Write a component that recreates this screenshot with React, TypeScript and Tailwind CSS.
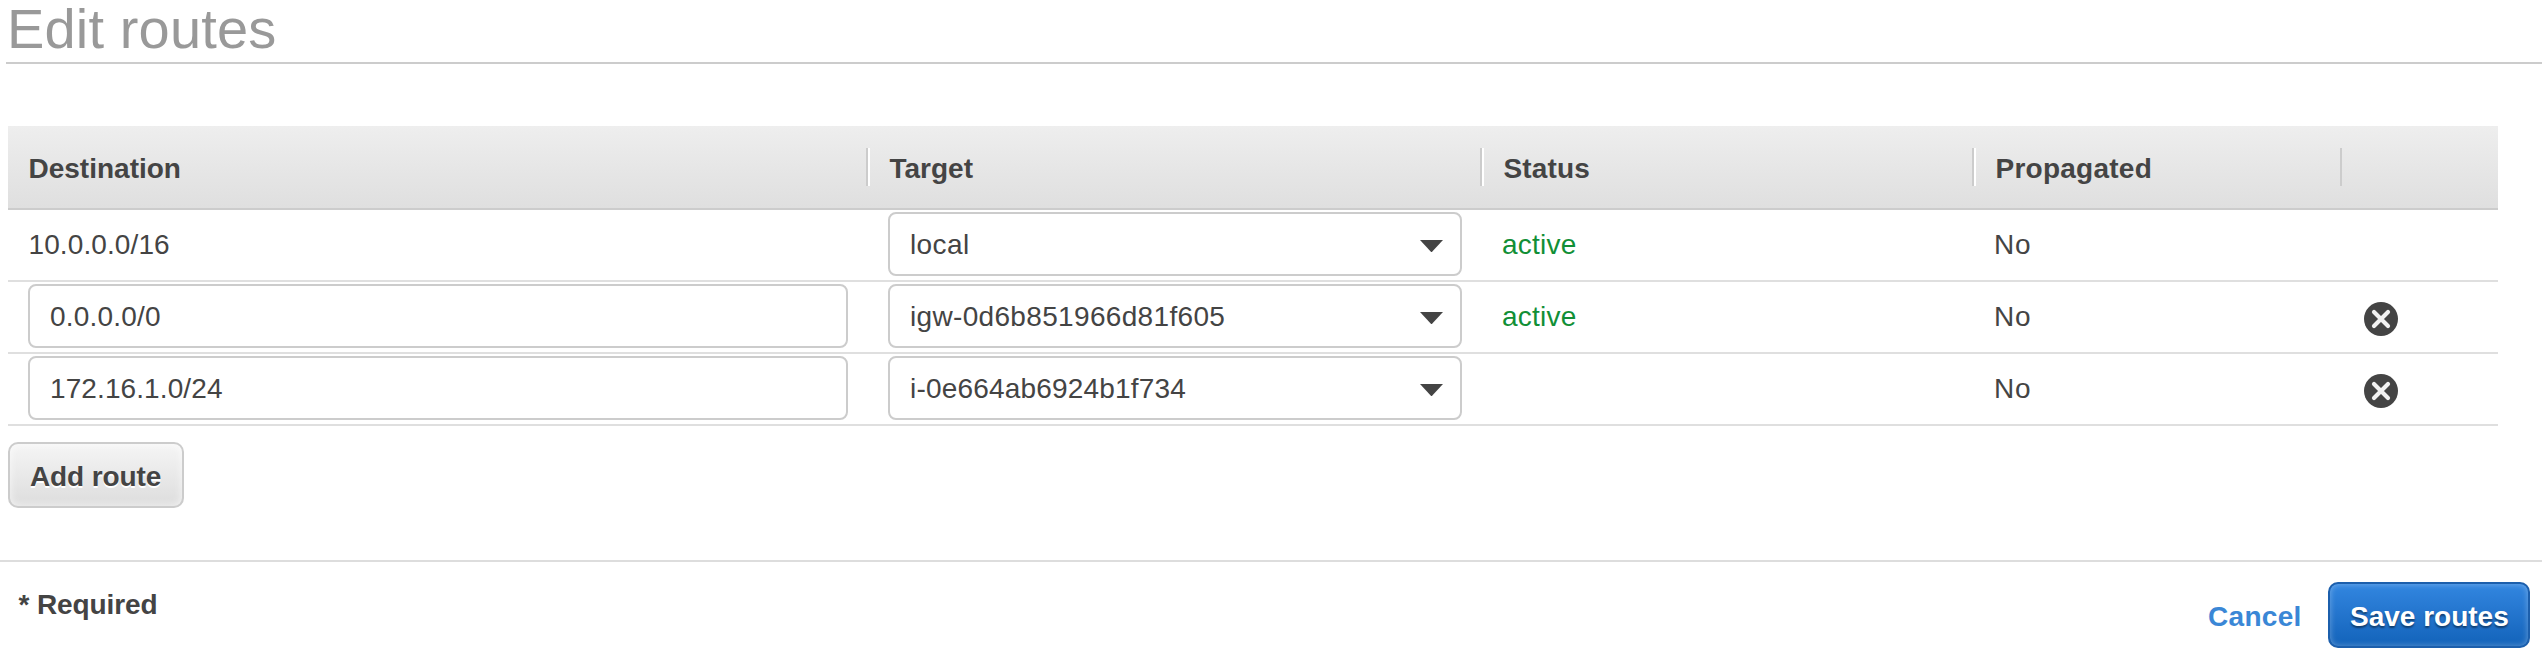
import React from "react";

type Route = {
  destination: string;
  destinationSpacing: string;
  target: string;
  targetSpacing: string;
  status: string;
  locked: boolean;
};

const routes: Route[] = [
  { destination: "10.0.0.0/16", destinationSpacing: "tracking-[0.1px]", target: "local", targetSpacing: "tracking-[0.4px]", status: "active", locked: true },
  { destination: "0.0.0.0/0", destinationSpacing: "tracking-[0.2px]", target: "igw-0d6b851966d81f605", targetSpacing: "tracking-[0.33px]", status: "active", locked: false },
  { destination: "172.16.1.0/24", destinationSpacing: "tracking-[0.1px]", target: "i-0e664ab6924b1f734", targetSpacing: "tracking-[0.18px]", status: "", locked: false },
];

const columns = "grid grid-cols-[858px_614px_492px_368px_158px]";

function Divider({ highlight = true }: { highlight?: boolean }) {
  return (
    <span
      className={
        highlight
          ? "h-[38px] w-1 shrink-0 border-l-2 border-r-2 border-l-[#cccccc] border-r-white"
          : "h-[38px] w-1 shrink-0 border-l-2 border-l-[#cccccc]"
      }
    />
  );
}

function CaretIcon() {
  return (
    <svg className="mb-[-4px] h-3 w-[23px]" viewBox="0 0 23 12" fill="#444444">
      <path d="M0 0H23L11.5 12.4Z" />
    </svg>
  );
}

function RemoveIcon() {
  return (
    <svg className="size-[34px]" viewBox="0 0 34 34">
      <circle cx="17" cy="17" r="17" fill="#444444" />
      <path d="M10 10L24 24M24 10L10 24" stroke="#f2f2f2" strokeWidth="4.2" strokeLinecap="round" />
    </svg>
  );
}

function RouteRow({ route }: { route: Route }) {
  return (
    <div className={`${columns} h-[72px] border-b-2 border-[#dfdfdf] pt-0.5 leading-[66px]`}>
      <div className="pl-[20.5px]">
        {route.locked ? (
          <span className={route.destinationSpacing}>{route.destination}</span>
        ) : (
          <div className={`-ml-[0.5px] h-16 w-[820px] rounded-lg border-2 border-[#cccccc] pl-5 leading-[62px] ${route.destinationSpacing}`}>
            {route.destination}
          </div>
        )}
      </div>
      <div className="pl-[22px]">
        <div className="flex h-16 w-[574px] justify-between rounded-lg border-2 border-[#cccccc] pl-5 pr-[17.5px] leading-[62px]">
          <span className={route.targetSpacing}>{route.target}</span>
          <span className="flex h-[60px] items-center">
            <CaretIcon />
          </span>
        </div>
      </div>
      <div className="pl-[22px] tracking-[0.25px] text-[#118f36]">{route.status}</div>
      <div className="pl-[22px] tracking-[0.8px]">No</div>
      <div className="flex h-[70px] items-center pl-6">{!route.locked && <RemoveIcon />}</div>
    </div>
  );
}

export default function App() {
  return (
    <main className="h-[664px] w-[2542px] bg-white font-['Liberation_Sans',Arial,sans-serif] text-[28px] text-[#444444]">
      <h1 className="ml-1.5 h-16 border-b-2 border-[#cccccc] pl-px text-[56px] leading-[58px] tracking-[0.15px] text-[#999999]">Edit routes</h1>

      <section className="ml-2 mt-[62px] w-[2490px]">
        <header className={`${columns} h-[84px] border-b-2 border-[#cccccc] bg-linear-to-b from-[#eeeeee] to-[#dfdfdf] font-bold leading-[86px]`}>
          <div className="pl-[20.5px]">Destination</div>
          <div className="flex pt-[22px]">
            <Divider />
            <span className="-mt-[22px] pl-[19.5px]">Target</span>
          </div>
          <div className="flex pt-[22px]">
            <Divider />
            <span className="-mt-[22px] pl-[19.5px] tracking-[0.15px]">Status</span>
          </div>
          <div className="flex pt-[22px]">
            <Divider />
            <span className="-mt-[22px] pl-[19.5px] tracking-[0.25px]">Propagated</span>
          </div>
          <div className="flex pt-[22px]">
            <Divider highlight={false} />
          </div>
        </header>
        {routes.map((route) => (
          <RouteRow key={route.destination} route={route} />
        ))}
      </section>

      <button className="ml-2 mt-4 block h-[66px] w-44 rounded-[10px] border-2 border-[#cccccc] bg-linear-to-b from-[#f5f5f5] to-[#dddddd] pl-5 pt-[3px] text-left font-bold leading-[31px] tracking-[-0.1px] shadow-[inset_0_0_8px_rgba(255,255,255,0.7)] [text-shadow:0_2px_0_#ffffff]">
        Add route
      </button>

      <footer className="mt-[52px] flex justify-between border-t-2 border-[#dddddd] pl-[18.5px] pr-3 pt-5 font-bold">
        <span className="pt-[5px] leading-[36px] tracking-[-0.1px]">* Required</span>
        <div className="flex h-[66px]">
          <a className="w-[120px] leading-[70px] tracking-[0.3px] text-[#3a87d6]">Cancel</a>
          <button className="h-[66px] w-[202px] rounded-[10px] border-2 border-[#1c5fac] bg-linear-to-b from-[#3286e0] to-[#1263ba] pl-5 pt-[3px] text-left leading-[31px] text-white shadow-[inset_0_0_6px_rgba(255,255,255,0.35)] [text-shadow:0_2px_2px_rgba(0,0,0,0.45)]">
            Save routes
          </button>
        </div>
      </footer>
    </main>
  );
}
